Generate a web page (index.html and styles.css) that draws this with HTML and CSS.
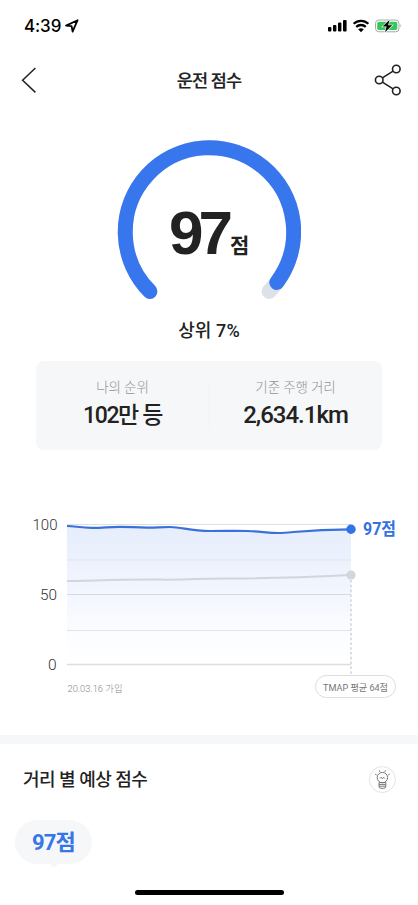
FILE: index.html
```html
<!DOCTYPE html>
<html lang="ko">
<head>
<meta charset="utf-8">
<meta name="viewport" content="width=device-width, initial-scale=1">
<title>운전 점수</title>
<link rel="stylesheet" href="styles.css">
</head>
<body>
<div class="app">
  <div class="status">
    <div class="status-left">
      <span class="clock">4:39</span>
      <svg class="locate" width="14" height="14" viewBox="0 0 14 14"><path d="M1.1 6.6 12.6 1.2 7.6 12.6 6.6 7.2Z" fill="none" stroke="#000" stroke-width="1.8" stroke-linejoin="round"/></svg>
    </div>
    <svg class="status-icons" width="76" height="16" viewBox="0 0 76 16">
      <rect x="1" y="9" width="3.4" height="4.6" rx="1"/><rect x="6" y="7" width="3.4" height="6.6" rx="1"/><rect x="11" y="4.6" width="3.4" height="9" rx="1"/><rect x="16" y="2" width="3.6" height="11.6" rx="1"/>
      <path d="M26.6 5.8A10.6 10.6 0 0 1 41.4 5.8M29.2 8.9A7 7 0 0 1 38.8 8.9" fill="none" stroke="#000" stroke-width="2.3"/><path d="M31.2 11.3Q34 9.3 36.8 11.3L34 14.2Z"/>
      <rect x="48.5" y="2" width="23.5" height="11.8" rx="3.4" fill="#fff" stroke="#a5a8a7"/><rect x="50.2" y="3.7" width="20.1" height="8.4" rx="1.8" fill="#35c759"/><path d="M73.4 6q1.7 1.8 0 3.8z" fill="#a5a8a7"/>
      <path d="M62.6 1.8 55.6 8.6H59.6L58 14.2 65.2 7.3H61.1Z" stroke="#fff" stroke-width="1.2" paint-order="stroke"/>
    </svg>
  </div>
  <header class="nav">
    <svg width="18" height="28" viewBox="0 0 18 28"><path d="M14.4 2 1.6 14.2 14.4 26.4" fill="none" stroke="#222" stroke-width="1.5"/></svg>
    <h1>운전 점수</h1>
    <svg width="28" height="32" viewBox="0 0 28 32" fill="none" stroke="#222" stroke-width="1.6"><circle cx="5.2" cy="16" r="3.8"/><circle cx="22.3" cy="5" r="3.8"/><circle cx="22.3" cy="27" r="3.8"/><path d="M8.4 13.9 19.1 7.1M8.4 18.1 19.1 24.9"/></svg>
  </header>
  <section class="score">
    <div class="gauge">
      <svg width="184" height="162" viewBox="0 0 184 162" fill="none" stroke-width="15" stroke-linecap="round">
        <path d="M32.9 151.4A84.2 84.2 0 1 1 152.1 151.4" stroke="#dfe1e8"/>
        <path d="M32.9 151.4A84.2 84.2 0 1 1 159.8 142.4" stroke="#3776ed"/>
      </svg>
      <div class="value"><span class="num">97</span><span class="unit">점</span></div>
    </div>
    <p class="rank">상위 7%</p>
  </section>
  <section class="card">
    <div class="stat"><span class="label">나의 순위</span><strong class="place">102만 등</strong></div>
    <div class="stat"><span class="label">기준 주행 거리</span><strong class="distance">2,634.1km</strong></div>
  </section>
  <svg class="chart" width="418" height="210" viewBox="0 500 418 210">
    <defs><linearGradient id="area" x1="0" y1="0" x2="0" y2="1"><stop offset="0" stop-color="#e6edfc"/><stop offset=".48" stop-color="#f2f6fe"/><stop offset=".8" stop-color="#fcfdff"/><stop offset="1" stop-color="#fff"/></linearGradient></defs>
    <path d="M67 524.5H351" stroke="#dedfe2"/>
    <path d="M67 526C75 526 80 527.8 92 527.8S108 526.8 120 526.8S135 527.6 147 527.6S158 527 170 527S190 531 210 531S235 530.7 248 531S267 533 279 533S306 529.3 351 529.3V664H67Z" fill="url(#area)"/>
    <path d="M67 560H351M67 630.5H351" stroke="#e0e3eb"/><path d="M67 594.5H351" stroke="#d6d9e1"/><path d="M67 664.5H351" stroke="#dcdde0" stroke-width="1.3"/>
    <path d="M67 581C95 580.6 120 579.3 160 579.6S190 578.3 230 578.4S310 577 351 575" fill="none" stroke="#d2d5dd" stroke-width="2"/>
    <path d="M67 526C75 526 80 527.8 92 527.8S108 526.8 120 526.8S135 527.6 147 527.6S158 527 170 527S190 531 210 531S235 530.7 248 531S267 533 279 533S306 529.3 351 529.3" fill="none" stroke="#3b70d8" stroke-width="2.2"/>
    <path d="M351 580V675" stroke="#d9dade" stroke-width="1.8" stroke-dasharray="2.6 2.2"/>
    <circle cx="351" cy="575" r="4.6" fill="#d4d6dc"/><circle cx="351" cy="529.3" r="4.7" fill="#3173e9"/>
    <g class="axis"><text x="32.5" y="530" textLength="25" lengthAdjust="spacingAndGlyphs">100</text><text x="40" y="600" textLength="17" lengthAdjust="spacingAndGlyphs">50</text><text x="48" y="670">0</text></g>
    <text class="joined" x="67.5" y="691.5" textLength="55" lengthAdjust="spacingAndGlyphs">20.03.16 가입</text>
    <text class="current" x="363" y="535" textLength="33" lengthAdjust="spacingAndGlyphs">97점</text>
    <rect x="315.5" y="675.5" width="80" height="22" rx="11" fill="#fff" stroke="#dcdddf"/>
    <text class="average" x="323" y="690.5" textLength="65" lengthAdjust="spacingAndGlyphs">TMAP 평균 64점</text>
  </svg>
  <div class="divider"></div>
  <section class="expected">
    <div class="expected-head">
      <h2>거리 별 예상 점수</h2>
      <svg width="28" height="28" viewBox="0 0 28 28" fill="none" stroke="#777" stroke-width="1"><circle cx="14.4" cy="13.5" r="13" stroke="#e3e4e6"/><circle cx="14.4" cy="11.6" r="5.2"/><path d="M11 16.5H17.8V20.2Q17.8 22.3 15.9 22.3H12.9Q11 22.3 11 20.2ZM11 18.4H17.8M11 20.2H17.8M12 12.5 13.2 11.2 14.4 12.7 15.6 11.2 16.8 12.5M11.4 4.4 11.9 5.9M17.4 4.4 16.9 5.9M7.1 8.1 8.7 9M21.7 8.1 20.1 9"/></svg>
    </div>
    <div class="bubble">97점</div>
  </section>
  <div class="home"></div>
</div>
</body>
</html>
```
FILE: styles.css
```css
* { box-sizing: border-box; }
body { margin: 0; background: #fff; color: #222; font-family: Roboto, "Noto Sans CJK KR", sans-serif; }
h1, h2, p { margin: 0; }
svg { display: block; flex: none; }
.app { width: 418px; height: 905px; display: flex; flex-direction: column; overflow: hidden; }
.status { height: 52px; padding: 0 15px 0 24px; display: flex; align-items: center; justify-content: space-between; }
.status-left { display: flex; align-items: center; gap: 4px; }
.clock { font: 500 17px/20px Inter, sans-serif; color: #000; letter-spacing: -.1px; }
.nav { height: 56px; padding: 0 16px 0 21px; display: flex; align-items: center; justify-content: space-between; }
.nav h1 { font-size: 17.5px; line-height: 24px; font-weight: 500; letter-spacing: -.8px; -webkit-text-stroke: .2px; padding: 2px 0 0 5px; }
.score { height: 253px; padding-top: 31.5px; display: flex; flex-direction: column; align-items: center; }
.gauge { width: 184px; height: 162px; display: grid; }
.gauge > * { grid-area: 1 / 1; }
.value { padding: 63.5px 0 0 52px; display: flex; align-items: baseline; line-height: 60px; height: 125px; }
.num { font: 700 62px/60px "Liberation Sans", sans-serif; letter-spacing: -5px; }
.unit { font-size: 21px; font-weight: 700; line-height: 30px; margin-left: 2px; position: relative; top: -1px; }
.rank { margin-top: 16px; font-size: 18px; line-height: 26px; font-weight: 500; letter-spacing: .1px; }
.card { flex: none; height: 89px; margin: 0 36px; border-radius: 8px; background: #f6f7f9; display: grid; grid-template-columns: 1fr 1fr; }
.stat { display: flex; flex-direction: column; align-items: center; padding-top: 16px; }
.stat + .stat { background: linear-gradient(#f1f2f4, #f1f2f4) 0 22px / 1px 45px no-repeat; }
.label { font-size: 13.5px; line-height: 20px; font-weight: 300; color: #929496; letter-spacing: -.1px; }
.stat strong { margin-top: 1px; font-size: 24px; line-height: 34px; font-weight: 500; letter-spacing: -1px; }
.stat .place { font-size: 23px; letter-spacing: -1.4px; margin-top: 2px; }
.chart { margin-top: 50px; }
.axis { font-size: 15.5px; fill: #333; font-weight: 300; }
.joined { font-size: 9.5px; font-weight: 300; fill: #888; }
.current { font-size: 17.5px; font-weight: 700; fill: #3471e4; }
.average { font-size: 9.5px; fill: #777; }
.divider { flex: none; height: 9px; margin-top: 24.5px; background: #f6f7f9; }
.expected { height: 132px; padding: 22px 22px 0 23px; }
.expected-head { height: 28px; display: flex; align-items: center; justify-content: space-between; }
.expected h2 { font-size: 18px; line-height: 26px; font-weight: 500; letter-spacing: -.5px; }
.bubble { position: relative; width: 77px; height: 44px; margin: 26px 0 0 -8px; border-radius: 22px; background: #f6f7f9; color: #3776e6; font-size: 22px; line-height: 45px; font-weight: 700; letter-spacing: -.8px; text-align: center; }
.bubble::after { content: ""; position: absolute; left: 34px; bottom: -4px; border: solid transparent; border-width: 5px 5px 0; border-top-color: #f6f7f9; }
.home { flex: none; width: 149px; height: 5px; margin: 14.5px auto 0; border-radius: 3px; background: #000; }
```
